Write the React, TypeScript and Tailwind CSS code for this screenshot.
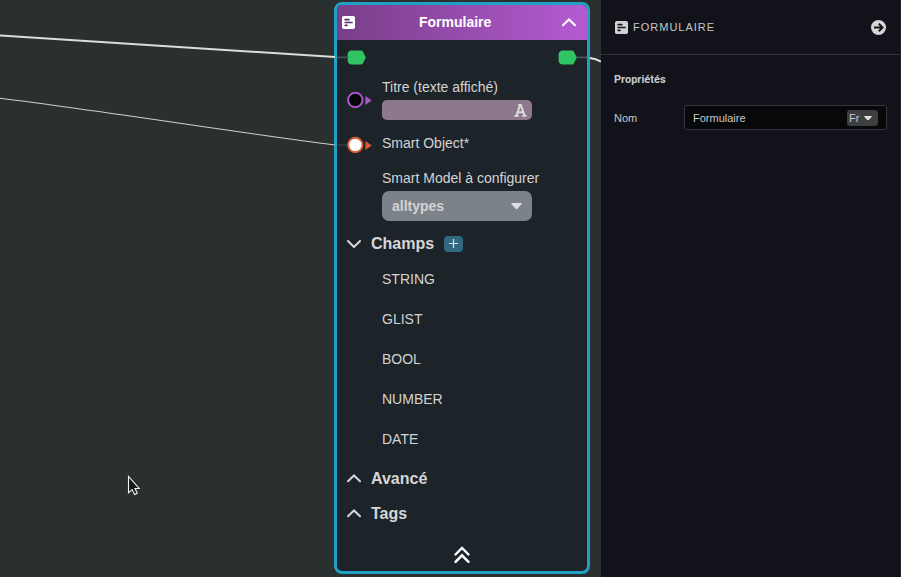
import type { ReactNode } from "react";

function FormIcon({ size, color, hole }: { size: number; color: string; hole: string }) {
  return (
    <svg width={size} height={size} viewBox="0 0 13 13" className="shrink-0">
      <rect width="13" height="13" rx="1.8" fill={color} />
      <path d="M3.2 3.7h3.6M3.2 6.5h6.8M3.2 9.3h1.8" stroke={hole} strokeWidth="1.7" strokeLinecap="round" />
    </svg>
  );
}

function Chevron({ down = false, color = "#d6d6d6" }: { down?: boolean; color?: string }) {
  return (
    <svg width="14" height="9" viewBox="0 0 14 9" fill="none" className="shrink-0">
      <path
        d={down ? "M1 2 7 8l6-6" : "M1 7.3 7 1.5l6 5.8"}
        stroke={color}
        strokeWidth="2"
        strokeLinecap="round"
      />
    </svg>
  );
}

function FlowPort() {
  return (
    <svg width="19" height="15" viewBox="0 0 19 15">
      <path
        d="M4.2 .5H14q1.2 0 1.8 1.1L18.8 7.5l-3 5.9q-.6 1.1-1.8 1.1H4.2Q.6 13.6.6 10.5v-6Q.6 1.4 4.2.5z"
        fill="#31c463"
      />
    </svg>
  );
}

function DataPort({ stroke, fill }: { stroke: string; fill: string }) {
  return (
    <svg width="26" height="18" viewBox="0 0 26 18" className="shrink-0">
      <circle cx="8.3" cy="9" r="7.2" fill={fill} stroke={stroke} strokeWidth="2" />
      <path d="M18.4 5.1v8.8l6.3-4.4z" fill={stroke} />
    </svg>
  );
}

function Caret({ width }: { width: number }) {
  return (
    <svg width={width} height={width * 0.55} viewBox="0 0 12 6.6" className="mt-px">
      <path d="M1 0h10q1 0 .6 1L7.2 5.9q-1.2 1.1-2.4 0L.4 1Q0 0 1 0z" fill="#dedede" />
    </svg>
  );
}

function Section({ title, down, children }: { title: string; down?: boolean; children?: ReactNode }) {
  return (
    <div className="flex h-[35px] items-center pl-2.5 text-[16px] font-bold text-[#d6d6d6]">
      <Chevron down={down} />
      <span className="ml-2.5">{title}</span>
      {children}
    </div>
  );
}

function FormNode() {
  return (
    <section className="absolute left-[334px] top-[2px] flex h-[572px] w-[256px] flex-col overflow-hidden rounded-[8px] border-[3px] border-[#20a0c2] bg-[#1c242a] text-[14px] text-[#d3d3d3]">
      <header className="flex h-[35px] shrink-0 items-center bg-linear-to-r from-[#793e89] to-[#b45bd2] pl-[5px] pr-[11px] text-white">
        <FormIcon size={13} color="#ffffff" hole="#5a2f69" />
        <h1 className="ml-[64px] mr-auto text-[14px] font-bold">Formulaire</h1>
        <Chevron color="#ffffff" />
      </header>

      <div className="flex h-[35px] shrink-0 items-center justify-between px-2.5">
        <FlowPort />
        <FlowPort />
      </div>

      <div className="flex h-[50px] shrink-0 items-center pl-2.5">
        <DataPort stroke="#aa56c7" fill="#050507" />
        <div className="mb-[5px] ml-[9px] flex w-[150px] flex-col">
          <label className="h-[25px] whitespace-nowrap leading-6">Titre (texte affiché)</label>
          <div className="flex h-5 items-center justify-end rounded-[5px] bg-[#8d788e] pr-[5px]">
            <svg width="13" height="13" viewBox="0 0 13 13" fill="none" stroke="#dedbde" strokeWidth="2">
              <path d="M2.4 11.8 6 1.2h.9l3.7 10.6M3.9 8.2h5.2" />
              <path d="M.4 11.9h4.2M8.3 11.9h4.3M4.2 1.1h3" strokeWidth="1.6" />
            </svg>
          </div>
        </div>
      </div>

      <div className="flex h-10 shrink-0 items-center pl-2.5">
        <DataPort stroke="#db5932" fill="#ffffff" />
        <span className="mb-1 ml-[9px]">Smart Object*</span>
      </div>

      <div className="flex shrink-0 flex-col pl-[45px]">
        <label className="h-[26px] whitespace-nowrap leading-[26px]">Smart Model à configurer</label>
        <div className="flex h-[30px] w-[150px] items-center justify-between rounded-[7px] bg-[#7b8289] px-2.5 font-bold">
          <span>alltypes</span>
          <Caret width={11} />
        </div>
      </div>

      <div className="mt-[5px]">
        <Section title="Champs" down>
          <span className="ml-2.5 flex h-4 w-[19px] items-center justify-center rounded-[4px] bg-[#316781]">
            <svg width="9" height="9" viewBox="0 0 9 9" stroke="#d5dde1" strokeWidth="1.2">
              <path d="M4.5 0v9M0 4.5h9" />
            </svg>
          </span>
        </Section>
      </div>
      <ul className="-mt-0.5 mb-0.5 pl-[45px]">
        {["STRING", "GLIST", "BOOL", "NUMBER", "DATE"].map((field) => (
          <li key={field} className="flex h-10 items-center">
            {field}
          </li>
        ))}
      </ul>
      <Section title="Avancé" />
      <Section title="Tags" />
      <div className="mt-[15px] flex justify-center">
        <svg width="16" height="18" viewBox="0 0 16 18" fill="none" stroke="#fff" strokeWidth="2.4" strokeLinecap="round">
          <path d="M1.5 8.5 8 2l6.5 6.5M1.5 15.8 8 9.3l6.5 6.5" />
        </svg>
      </div>
    </section>
  );
}

export default function App() {
  return (
    <div className="flex h-[577px] w-[901px] overflow-hidden bg-[#12131a] font-['Liberation_Sans',Arial,sans-serif]">
      <main className="relative w-[601px] shrink-0 overflow-hidden bg-[#29302f]">
        <FormNode />
        <svg className="absolute inset-0 h-full w-full" viewBox="0 0 601 577" fill="none">
          <path d="M0 35.5C120 43 240 51 335 57" stroke="#dcdcd8" strokeWidth="2" />
          <path d="M0 98.3C110 112 240 133 335 145" stroke="#cfd0cc" strokeWidth="1.1" />
          <path d="M337 57.3h10M577 57.3h10" stroke="#4b5053" strokeWidth="1.8" />
          <path d="M337 145h10" stroke="#3b4144" strokeWidth="1.3" />
          <path d="M590 58q6 .8 11 3.6" stroke="#e5e5e5" strokeWidth="2" />
          <path d="M128.5 476.5v16.3l3.6-3.2 2.5 5 2.7-1.3-2.3-4.8h4.2z" fill="#18191a" stroke="#f4f4f4" strokeWidth="1.1" />
        </svg>
      </main>

      <aside className="w-[300px] shrink-0 border-r border-[#202623] text-[#c7c7c9]">
        <header className="flex h-[55px] items-center border-b border-[#303235] px-[14px]">
          <FormIcon size={13} color="#d2d2d2" hole="#15161d" />
          <h2 className="ml-[5px] text-[11px] tracking-[1px]">FORMULAIRE</h2>
          <svg className="ml-auto" width="15" height="15" viewBox="0 0 15 15" fill="none">
            <circle cx="7.5" cy="7.5" r="7.5" fill="#d6d6d6" />
            <path d="M3 7.5h8.5M7.8 3.8l3.8 3.7-3.8 3.7" stroke="#12131a" strokeWidth="1.9" />
          </svg>
        </header>
        <div className="px-[13px]">
          <h3 className="mt-[17px] h-4 font-['Roboto',sans-serif] text-[11px] font-bold leading-4">Propriétés</h3>
          <div className="mt-[17px] flex items-center text-[11px]">
            <label className="w-[70px] pt-px">Nom</label>
            <div className="flex h-[25px] w-[203px] items-center justify-between rounded-[3px] border border-[#36373a] bg-[#070809] pl-2 pr-2">
              <span className="pt-px">Formulaire</span>
              <span className="flex h-4 w-[31px] items-center justify-between rounded-[3px] bg-[#3d3e40] pl-[2px] pr-[6px]">
                <span className="pt-px">Fr</span>
                <Caret width={8} />
              </span>
            </div>
          </div>
        </div>
      </aside>
    </div>
  );
}
